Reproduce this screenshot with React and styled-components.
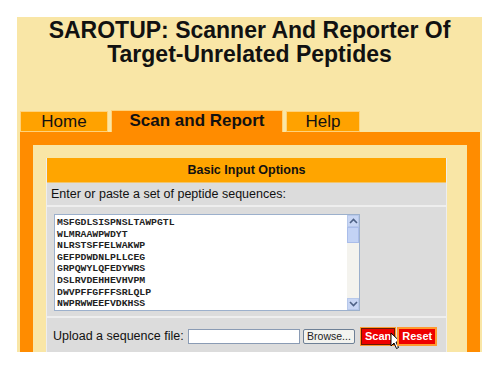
import React from "react";
import styled, { createGlobalStyle } from "styled-components";

const sequences = [
  "MSFGDLSISPNSLTAWPGTL",
  "WLMRAAWPWDYT",
  "NLRSTSFFELWAKWP",
  "GEFPDWDNLPLLCEG",
  "GRPQWYLQFEDYWRS",
  "DSLRVDEHHEVHVPM",
  "DWVPFFGFFFSRLQLP",
  "NWPRWWEEFVDKHSS",
];

const tabs = [
  { label: "Home", width: 88 },
  { label: "Scan and Report", width: 172, active: true },
  { label: "Help", width: 74 },
];

const App = () => {
  return (
    <>
      <GlobalStyle />
      <Page>
        <Title>
          SAROTUP: Scanner And Reporter Of
          <br />
          Target-Unrelated Peptides
        </Title>
        <TabBar>
          {tabs.map((tab) => (
            <Tab key={tab.label} $active={tab.active} $width={tab.width}>
              {tab.label}
            </Tab>
          ))}
        </TabBar>
        <Panel>
          <Inner>
            <FormBox>
              <Header>Basic Input Options</Header>
              <Row>Enter or paste a set of peptide sequences:</Row>
              <AreaRow>
                <TextBox>
                  <Lines>
                    {sequences.map((s) => (
                      <Line key={s}>{s}</Line>
                    ))}
                  </Lines>
                  <ScrollBar>
                    <ScrollBtn>
                      <svg width="9" height="6" viewBox="0 0 9 6">
                        <path d="M1 5 L4.5 1.5 L8 5" fill="none" stroke="#4d6185" strokeWidth="1.6" />
                      </svg>
                    </ScrollBtn>
                    <Thumb />
                    <Track />
                    <ScrollBtn>
                      <svg width="9" height="6" viewBox="0 0 9 6">
                        <path d="M1 1 L4.5 4.5 L8 1" fill="none" stroke="#4d6185" strokeWidth="1.6" />
                      </svg>
                    </ScrollBtn>
                  </ScrollBar>
                </TextBox>
              </AreaRow>
              <UploadRow>
                <UploadLabel>Upload a sequence file:</UploadLabel>
                <FileField />
                <BrowseButton>Browse...</BrowseButton>
                <ActionButton $dark>
                  Scan
                  <Cursor width="12" height="18" viewBox="0 0 12 18">
                    <path
                      d="M1 1 L1 14 L4 11 L6.5 16.5 L8.5 15.5 L6 10 L10.5 10 Z"
                      fill="#fff"
                      stroke="#000"
                      strokeWidth="1"
                      strokeLinejoin="round"
                    />
                  </Cursor>
                </ActionButton>
                <ActionButton>Reset</ActionButton>
              </UploadRow>
            </FormBox>
          </Inner>
        </Panel>
      </Page>
    </>
  );
};

export default App;

const GlobalStyle = createGlobalStyle`
  body {
    margin: 0;
    background: #ffffff;
    font-family: "Liberation Sans", Arial, sans-serif;
  }
`;

const Page = styled.div`
  margin: 17px 0 0 17px;
  width: 465px;
  height: 335px;
  overflow: hidden;
  background: #f9e6a6;
`;

const Title = styled.h1`
  margin: 0;
  padding-top: 1px;
  text-align: center;
  font-size: 23px;
  line-height: 24px;
  font-weight: bold;
  color: #111;
`;

const TabBar = styled.div`
  display: flex;
  align-items: flex-end;
  gap: 3px;
  margin-top: 44px;
  padding-left: 3px;
  height: 22px;
`;

const Tab = styled.div`
  box-sizing: border-box;
  width: ${(p) => p.$width}px;
  height: ${(p) => (p.$active ? 22 : 21)}px;
  background: ${(p) => (p.$active ? "#ff8c00" : "#ffa200")};
  border: 1px solid #ffd27a;
  border-bottom: ${(p) => (p.$active ? "none" : "1px solid #ffd27a")};
  text-align: center;
  font-size: 17px;
  line-height: 20px;
  font-weight: ${(p) => (p.$active ? "bold" : "normal")};
  color: #111;
`;

const Panel = styled.div`
  margin: 0 2px 0 3px;
  padding: 13px 13px 0 13px;
  background: #ff8c00;
  height: 240px;
`;

const Inner = styled.div`
  padding: 13px 20px 0 13px;
  background: #f9e6a6;
  height: 100%;
`;

const FormBox = styled.div`
  background: #dcdcdc;
  border: 1px solid #eee;
  border-top: none;
`;

const Header = styled.div`
  height: 24px;
  background: #ffa500;
  text-align: center;
  font-size: 12.5px;
  font-weight: bold;
  line-height: 25px;
  color: #111;
  border-bottom: 1px solid #f3c56a;
`;

const Row = styled.div`
  height: 22px;
  padding-left: 4px;
  font-size: 12.5px;
  line-height: 22px;
  color: #111;
  border-bottom: 2px solid #eeeeee;
`;

const AreaRow = styled.div`
  padding: 7px 0 5px 7px;
  border-bottom: 2px solid #eeeeee;
`;

const TextBox = styled.div`
  box-sizing: border-box;
  display: flex;
  width: 306px;
  height: 97px;
  background: #fff;
  border: 1px solid #9cb0cc;
`;

const Lines = styled.div`
  flex: 1;
  padding: 2px 0 0 2px;
`;

const Line = styled.div`
  font-family: "Liberation Mono", "Courier New", monospace;
  font-size: 9.8px;
  font-weight: bold;
  line-height: 11.6px;
  color: #222;
`;

const ScrollBar = styled.div`
  display: flex;
  flex-direction: column;
  width: 12px;
  background: #f4f3ee;
`;

const ScrollBtn = styled.div`
  display: flex;
  align-items: center;
  justify-content: center;
  height: 12px;
  background: #c8d6f4;
  border: 1px solid #b7c8ea;
  box-sizing: border-box;
`;

const Thumb = styled.div`
  height: 16px;
  background: #c3d3f5;
  border: 1px solid #aabdea;
  box-sizing: border-box;
`;

const Track = styled.div`
  flex: 1;
`;

const UploadRow = styled.div`
  display: flex;
  align-items: center;
  height: 36px;
  padding-left: 6px;
`;

const UploadLabel = styled.span`
  font-size: 12.5px;
  color: #111;
  width: 135px;
`;

const FileField = styled.div`
  box-sizing: border-box;
  width: 112px;
  height: 15px;
  background: #fff;
  border: 1px solid #8a9bb4;
`;

const BrowseButton = styled.div`
  box-sizing: border-box;
  margin-left: 3px;
  width: 52px;
  height: 15px;
  background: #f3f3ef;
  border: 1px solid #6e8096;
  border-radius: 2px;
  font-size: 10.5px;
  line-height: 13px;
  text-align: center;
  color: #222;
`;

const ActionButton = styled.div`
  position: relative;
  box-sizing: border-box;
  margin-left: ${(p) => (p.$dark ? 6 : 3)}px;
  padding: 0 3px;
  height: 17px;
  background: #ee0000;
  border: 1px solid ${(p) => (p.$dark ? "#6a1a00" : "#ff9a30")};
  box-shadow: 0 0 0 1px #ff9a30;
  font-size: 11px;
  font-weight: bold;
  line-height: 15px;
  color: #fff;
`;

const Cursor = styled.svg`
  position: absolute;
  left: 28px;
  top: 3px;
`;
